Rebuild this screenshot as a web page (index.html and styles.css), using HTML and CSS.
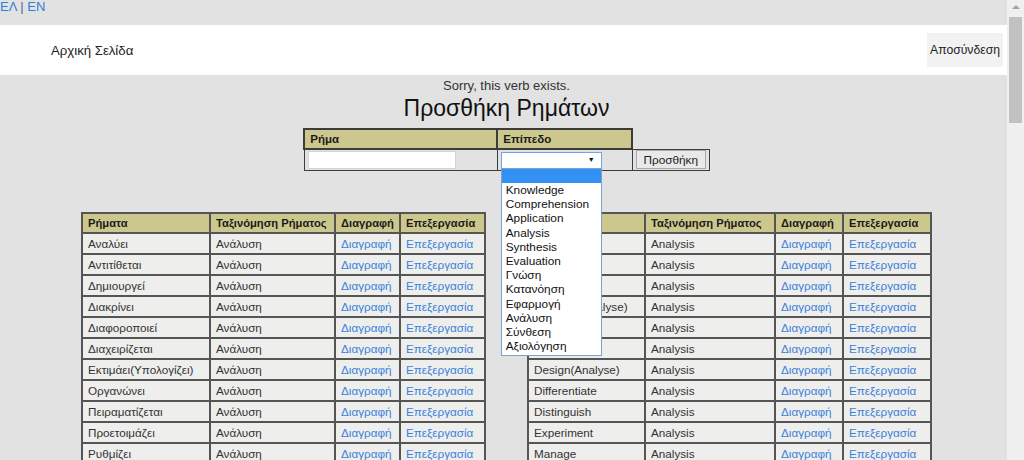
FILE: index.html
```html
<!DOCTYPE html>
<html lang="el">
<head>
<meta charset="utf-8">
<title>Προσθήκη Ρημάτων</title>
<link rel="stylesheet" href="styles.css">
</head>
<body>
<div class="page">
  <div class="lang"><a href="#">ΕΛ</a> <span class="sep">|</span> <a href="#">EN</a></div>
  <nav class="navbar">
    <a class="brand" href="#">Αρχική Σελίδα</a>
    <button class="logout">Αποσύνδεση</button>
  </nav>
  <main class="content">
    <p class="msg">Sorry, this verb exists.</p>
    <h1 class="title">Προσθήκη Ρημάτων</h1>
    <table class="form">
      <tr>
        <th class="fh fh1">Ρήμα</th>
        <th class="fh fh2">Επίπεδο</th>
        <th class="fh-empty"></th>
      </tr>
      <tr>
        <td class="fc"><div class="input"></div></td>
        <td class="fc fc-select">
          <div class="select"><span class="arrow">▼</span></div>
          <ul class="dropdown">
            <li class="selected">&nbsp;</li>
            <li>Knowledge</li>
            <li>Comprehension</li>
            <li>Application</li>
            <li>Analysis</li>
            <li>Synthesis</li>
            <li>Evaluation</li>
            <li>Γνώση</li>
            <li>Κατανόηση</li>
            <li>Εφαρμογή</li>
            <li>Ανάλυση</li>
            <li>Σύνθεση</li>
            <li>Αξιολόγηση</li>
          </ul>
        </td>
        <td class="fc fc-btn"><button class="add">Προσθήκη</button></td>
      </tr>
    </table>

    <div class="tables">
      <table class="verbs left">
        <colgroup><col class="l1"><col class="l2"><col class="l3"><col class="l4"></colgroup>
        <tr><th>Ρήματα</th><th>Ταξινόμηση Ρήματος</th><th>Διαγραφή</th><th>Επεξεργασία</th></tr>
        <tr><td>Αναλύει</td><td>Ανάλυση</td><td><a href="#">Διαγραφή</a></td><td><a href="#">Επεξεργασία</a></td></tr>
        <tr><td>Αντιτίθεται</td><td>Ανάλυση</td><td><a href="#">Διαγραφή</a></td><td><a href="#">Επεξεργασία</a></td></tr>
        <tr><td>Δημιουργεί</td><td>Ανάλυση</td><td><a href="#">Διαγραφή</a></td><td><a href="#">Επεξεργασία</a></td></tr>
        <tr><td>Διακρίνει</td><td>Ανάλυση</td><td><a href="#">Διαγραφή</a></td><td><a href="#">Επεξεργασία</a></td></tr>
        <tr><td>Διαφοροποιεί</td><td>Ανάλυση</td><td><a href="#">Διαγραφή</a></td><td><a href="#">Επεξεργασία</a></td></tr>
        <tr><td>Διαχειρίζεται</td><td>Ανάλυση</td><td><a href="#">Διαγραφή</a></td><td><a href="#">Επεξεργασία</a></td></tr>
        <tr><td>Εκτιμάει(Υπολογίζει)</td><td>Ανάλυση</td><td><a href="#">Διαγραφή</a></td><td><a href="#">Επεξεργασία</a></td></tr>
        <tr><td>Οργανώνει</td><td>Ανάλυση</td><td><a href="#">Διαγραφή</a></td><td><a href="#">Επεξεργασία</a></td></tr>
        <tr><td>Πειραματίζεται</td><td>Ανάλυση</td><td><a href="#">Διαγραφή</a></td><td><a href="#">Επεξεργασία</a></td></tr>
        <tr><td>Προετοιμάζει</td><td>Ανάλυση</td><td><a href="#">Διαγραφή</a></td><td><a href="#">Επεξεργασία</a></td></tr>
        <tr><td>Ρυθμίζει</td><td>Ανάλυση</td><td><a href="#">Διαγραφή</a></td><td><a href="#">Επεξεργασία</a></td></tr>
      </table>

      <table class="verbs right">
        <colgroup><col class="r1"><col class="r2"><col class="r3"><col class="r4"></colgroup>
        <tr><th>Ρήματα</th><th>Ταξινόμηση Ρήματος</th><th>Διαγραφή</th><th>Επεξεργασία</th></tr>
        <tr><td>Analyze</td><td>Analysis</td><td><a href="#">Διαγραφή</a></td><td><a href="#">Επεξεργασία</a></td></tr>
        <tr><td>Calculate</td><td>Analysis</td><td><a href="#">Διαγραφή</a></td><td><a href="#">Επεξεργασία</a></td></tr>
        <tr><td>Compare</td><td>Analysis</td><td><a href="#">Διαγραφή</a></td><td><a href="#">Επεξεργασία</a></td></tr>
        <tr><td>Contrast(Analyse)</td><td>Analysis</td><td><a href="#">Διαγραφή</a></td><td><a href="#">Επεξεργασία</a></td></tr>
        <tr><td>Criticize</td><td>Analysis</td><td><a href="#">Διαγραφή</a></td><td><a href="#">Επεξεργασία</a></td></tr>
        <tr><td>Debate</td><td>Analysis</td><td><a href="#">Διαγραφή</a></td><td><a href="#">Επεξεργασία</a></td></tr>
        <tr><td>Design(Analyse)</td><td>Analysis</td><td><a href="#">Διαγραφή</a></td><td><a href="#">Επεξεργασία</a></td></tr>
        <tr><td>Differentiate</td><td>Analysis</td><td><a href="#">Διαγραφή</a></td><td><a href="#">Επεξεργασία</a></td></tr>
        <tr><td>Distinguish</td><td>Analysis</td><td><a href="#">Διαγραφή</a></td><td><a href="#">Επεξεργασία</a></td></tr>
        <tr><td>Experiment</td><td>Analysis</td><td><a href="#">Διαγραφή</a></td><td><a href="#">Επεξεργασία</a></td></tr>
        <tr><td>Manage</td><td>Analysis</td><td><a href="#">Διαγραφή</a></td><td><a href="#">Επεξεργασία</a></td></tr>
      </table>
    </div>
  </main>
</div>
<div class="scrollbar">
  <div class="sb-arrow"></div>
  <div class="sb-thumb"></div>
</div>
</body>
</html>
```

FILE: styles.css
```css
html, body {
  margin: 0;
  padding: 0;
}
body {
  background: #e2e2e2;
  font-family: "Liberation Sans", Arial, sans-serif;
  color: #222;
  overflow: hidden;
  height: 460px;
}
.page {
  width: 1007px;
}
.lang {
  height: 25px;
  font-size: 13px;
  line-height: 14px;
  color: #4a6a9a;
}
.lang a {
  color: #2f80dc;
  text-decoration: none;
}
.navbar {
  background: #ffffff;
  height: 50px;
  display: flex;
  align-items: center;
  justify-content: space-between;
  padding: 0 4px 0 51px;
}
.brand {
  font-size: 13.2px;
  color: #222;
  text-decoration: none;
}
.logout {
  background: #f2f2f2;
  border: none;
  height: 34px;
  width: 76px;
  padding: 0;
  font-family: "Liberation Sans", Arial, sans-serif;
  font-size: 12.2px;
  color: #222;
}
.content {
  padding-left: 6px;
  text-align: center;
}
.msg {
  margin: 0;
  padding-top: 3px;
  font-size: 13px;
  line-height: 16px;
  color: #333;
}
.title {
  margin: 0;
  font-size: 23px;
  font-weight: normal;
  line-height: 28px;
  color: #111;
}

/* form */
.form {
  margin: 6px auto 0;
  border-collapse: collapse;
  font-size: 12px;
  text-align: left;
}
.fh {
  background: #ccc88d;
  border: 2px solid #3c3c3c;
  height: 17px;
  padding: 1px 5px 0;
  font-size: 11.5px;
  font-weight: bold;
  line-height: 15px;
  color: #1a1a1a;
}
.fh1 { width: 181px; }
.fh2 { width: 123px; }
.fh-empty {
  border: none;
  width: 76px;
  padding: 0;
}
.fc {
  border: 1px solid #3c3c3c;
  height: 20px;
  padding: 0 3px;
  vertical-align: middle;
}
.fc-select {
  position: relative;
}
.input {
  width: 146px;
  height: 16px;
  background: #fff;
  border: 1px solid #d4d4d4;
}
.select {
  width: 99px;
  height: 15px;
  background: #fff;
  border: 1px solid #6ea6e6;
  position: relative;
}
.arrow {
  position: absolute;
  right: 6px;
  top: 3px;
  font-size: 7px;
  line-height: 8px;
  color: #111;
}
.dropdown {
  position: absolute;
  left: 3px;
  top: 18px;
  width: 99px;
  margin: 0;
  padding: 0 0 2px;
  list-style: none;
  background: #fff;
  border: 1px solid #7f9fd0;
  z-index: 10;
  font-size: 11.8px;
}
.dropdown li {
  height: 14.2px;
  line-height: 14px;
  padding-left: 4px;
  color: #111;
  white-space: nowrap;
}
.dropdown li.selected {
  height: 14px;
  background: #3391f3;
}
.fc-btn {
  padding: 0 1px 0 3px;
}
.add {
  height: 19px;
  width: 70px;
  padding: 0;
  background: #e9e9e9;
  border: 1px solid #a9a9a9;
  font-family: "Liberation Sans", Arial, sans-serif;
  font-size: 11.8px;
  color: #222;
}

/* verb tables */
.tables {
  display: flex;
  gap: 41px;
  margin-top: 41px;
  padding-left: 75px;
}
.verbs {
  border-collapse: separate;
  border-spacing: 0;
  border: 1px solid #555;
  table-layout: fixed;
  width: 405px;
  font-size: 11.7px;
  text-align: left;
}
.verbs th,
.verbs td {
  border: 1px solid #555;
  padding: 2px 5px;
  line-height: 15px;
  white-space: nowrap;
  overflow: hidden;
}
.verbs th {
  background: #ccc88d;
  padding-bottom: 1px;
  font-size: 11.2px;
  font-weight: bold;
  color: #1a1a1a;
}
.verbs td {
  background: #eeeeec;
  color: #333;
}
.verbs a {
  color: #3a82dc;
  text-decoration: none;
}
.l1 { width: 128px; }
.l2 { width: 125px; }
.l3 { width: 65px; }
.l4 { width: 85px; }
.r1 { width: 117px; }
.r2 { width: 130px; }
.r3 { width: 68px; }
.r4 { width: 88px; }

/* scrollbar */
.scrollbar {
  position: fixed;
  top: 0;
  right: 0;
  width: 17px;
  height: 460px;
  background: #f0f0f0;
}
.sb-arrow {
  width: 0;
  height: 0;
  margin: 5px auto 0;
  border-left: 4px solid transparent;
  border-right: 4px solid transparent;
  border-bottom: 4px solid #a3a3a3;
}
.sb-thumb {
  margin: 8px 2px 0;
  height: 106px;
  background: #c1c1c1;
}
```
